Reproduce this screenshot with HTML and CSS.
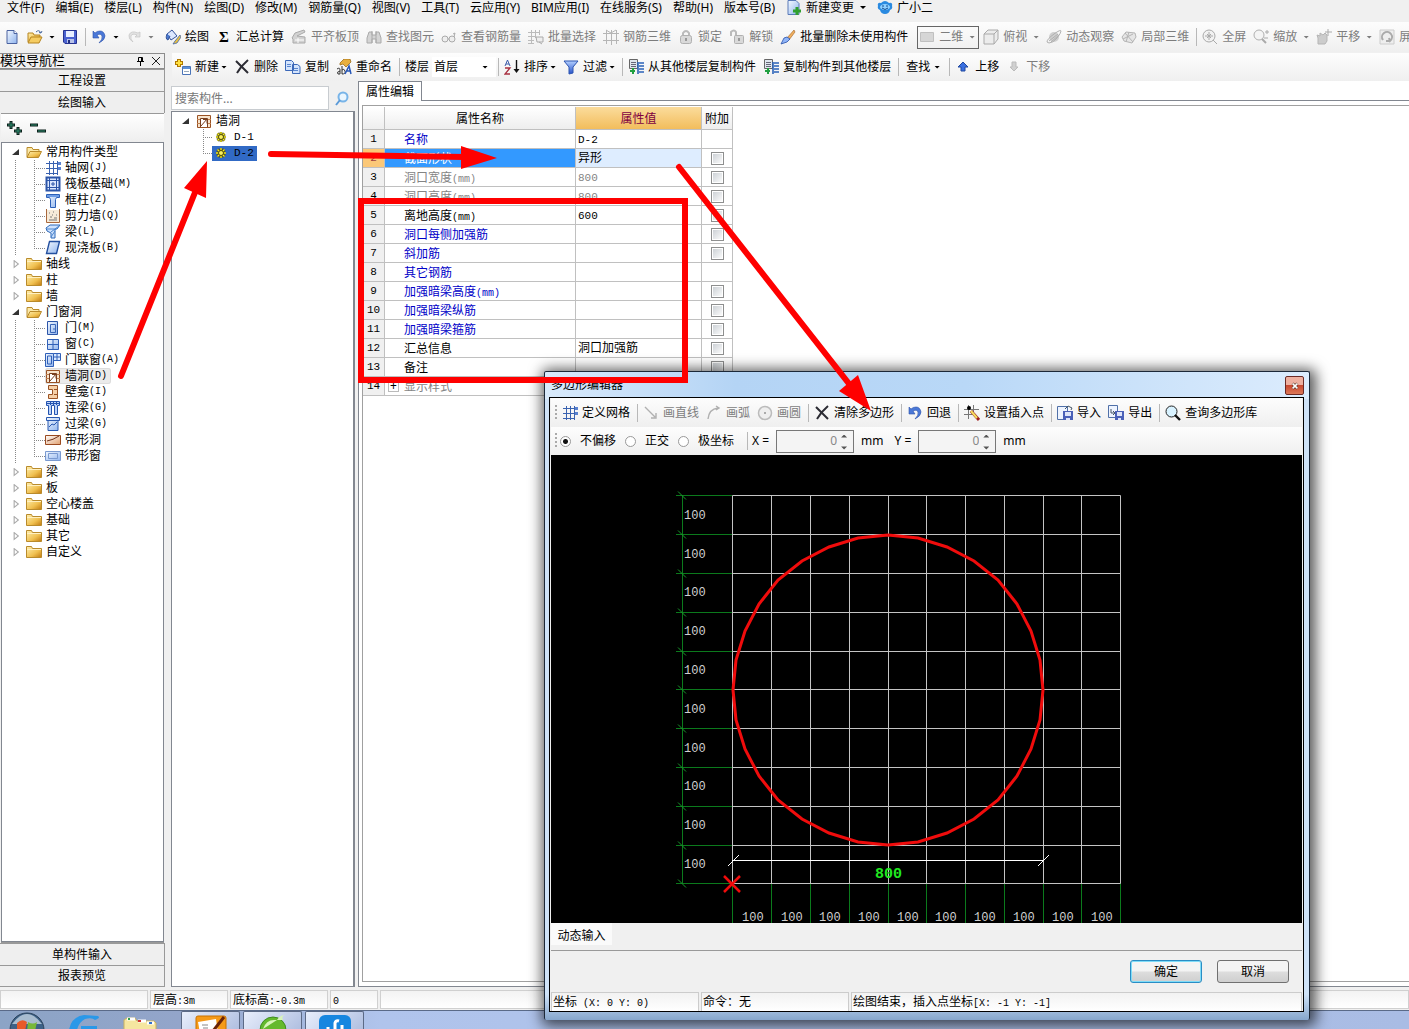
FILE: index.html
```html
<!DOCTYPE html>
<html lang="zh-CN">
<head>
<meta charset="utf-8">
<title>多边形编辑器</title>
<link rel="stylesheet" href="styles.css">
</head>
<body>
<svg class="defs" aria-hidden="true">
<defs>
<linearGradient id="gFold" x2="1" y2="1"><stop offset="0" stop-color="#fff0b0"/><stop offset=".6" stop-color="#f0c050"/><stop offset="1" stop-color="#c07a10"/></linearGradient>
<linearGradient id="gBlue" x2="1" y2="1"><stop offset="0" stop-color="#f4f9ff"/><stop offset="1" stop-color="#8fb4ee"/></linearGradient>
<linearGradient id="gDeep" x2="0" y2="1"><stop offset="0" stop-color="#b4d0ff"/><stop offset="1" stop-color="#2450c8"/></linearGradient>
<linearGradient id="gOr" x2="1" y2="1"><stop offset="0" stop-color="#fff"/><stop offset="1" stop-color="#e0a070"/></linearGradient>
</defs>
<symbol id="new" viewBox="0 0 16 16"><path d="M3 1.500h7l3 3v10H3z" fill="url(#gBlue)" stroke="#4a62a0"/><path d="M10 1.500v3h3" fill="#fff" stroke="#4a62a0"/></symbol>
<symbol id="open" viewBox="0 0 16 16"><path d="M1 13V4h5l1 2h6v3" fill="url(#gFold)" stroke="#b58420"/><path d="M1 14l3-6h11l-3 6z" fill="#f5cc62" stroke="#b58420"/><path d="M9 3q3-3 5 1m0 0l-2-.5m2 .5l1-2" fill="none" stroke="#4a6aa0"/></symbol>
<symbol id="save" viewBox="0 0 16 16"><path d="M1.500 1.500h13v13H3l-1.500-1.500z" fill="#4a62d0" stroke="#263390"/><path d="M4 2h8v6H4z" fill="#e8efff"/><path d="M5 10h7v4H5z" fill="#b9c3e8"/><path d="M6 11h2v3H6z" fill="#223080"/></symbol>
<symbol id="undo" viewBox="0 0 16 16"><path d="M2 2v7h6L6 6q4-2 5 1t-3 7q6-3 6-7-1-5-5-5-3 0-5 2z" fill="#4a78d8" stroke="#2b50a8" stroke-width=".6"/></symbol>
<symbol id="redo" viewBox="0 0 16 16"><path d="M14 3v5H9l2-2q-5-2-6 1t2 6q-5-3-4-7 2-5 9-2z" fill="#e2e2e2" stroke="#c4c4c4" stroke-width=".7"/></symbol>
<symbol id="paint" viewBox="0 0 16 16"><path d="M2 5l5-4 5 6-6 4z" fill="#dce8ff" stroke="#34539a"/><path d="M2 5q-2 5 1 6l2-4" fill="#4a7ad0" stroke="#34539a"/><path d="M15 6l-5 6-2 3 4-1 4-6z" fill="#e8c040" stroke="#4868a8" stroke-width=".8"/></symbol>
<symbol id="slab" viewBox="0 0 16 16"><path d="M1 9l3-5 9-3 1 2-8 4 8 1v6H2v-4z" fill="#d2d2d2" stroke="#aaa"/><path d="M4 11h9M7 9v5" stroke="#fff"/></symbol>
<symbol id="find" viewBox="0 0 16 16"><path d="M3 3h3v3h4V3h3l2 6v5h-5v-4H6v4H1V9z" fill="#d4d4d4" stroke="#aaa"/><path d="M6 2v12M10 2v12" stroke="#aaa"/></symbol>
<symbol id="glass" viewBox="0 0 16 16"><circle cx="4" cy="10" r="3" fill="#eee" stroke="#aaa"/><circle cx="11" cy="10" r="3" fill="#eee" stroke="#aaa"/><path d="M7 10h1M13 8l1-4-2 1" fill="none" stroke="#aaa"/></symbol>
<symbol id="batch" viewBox="0 0 16 16"><path d="M0 3.500h11M0 7.500h8M0 11.500h6M0 14.500h6M3.500 1v14M7.500 1v8M11.500 1v5" stroke="#bbb"/><path d="M8 8h7v5H9zM11 13l3 2" fill="#eee" stroke="#aaa"/></symbol>
<symbol id="grid3" viewBox="0 0 16 16"><path d="M0 4.500h16M0 11.500h16M3.500 1v14M8.500 1v15M13.500 1v14M3 1l5 3 5-3" fill="none" stroke="#b5b5b5"/></symbol>
<symbol id="lock" viewBox="0 0 16 16"><path d="M5 7V4q3-4 6 0v3" fill="none" stroke="#bbb" stroke-width="2"/><rect x="2.500" y="6.500" width="11" height="8" rx="2" fill="#d9d9d9" stroke="#b0b0b0"/><path d="M8 9v3" stroke="#999" stroke-width="2"/></symbol>
<symbol id="unlock" viewBox="0 0 16 16"><path d="M2 7V3q3-3 5 0v4" fill="none" stroke="#bbb" stroke-width="2"/><rect x="5.500" y="6.500" width="9" height="8" rx="1" fill="#d9d9d9" stroke="#b0b0b0"/><path d="M10 9v3" stroke="#999" stroke-width="2"/></symbol>
<symbol id="brush" viewBox="0 0 16 16"><path d="M14 1L7 9l2 2 6-8z" fill="#f0b060" stroke="#a06020" stroke-width=".6"/><path d="M7 8l-3 1-3 6 6-2 3-3z" fill="#8fb4f8" stroke="#2850a8" stroke-width=".8"/></symbol>
<symbol id="flat" viewBox="0 0 16 16"><path d="M1.500 3.500h13v9h-13z" fill="#d6d6d6" stroke="#c0c0c0"/></symbol>
<symbol id="cube" viewBox="0 0 16 16"><path d="M1 5l4-4h10v9l-4 5H1zM1 5h10v10M11 5l4-4" fill="#ececec" stroke="#aaa"/></symbol>
<symbol id="orbit" viewBox="0 0 16 16"><circle cx="8" cy="8" r="5" fill="#cfcfcf"/><path d="M1 13q0-3 7-8t7-3-4 7-8 5zM3 12l9-7M5 13l8-7" fill="none" stroke="#b0b0b0"/></symbol>
<symbol id="local" viewBox="0 0 16 16"><path d="M1 8l4-5 9 1 1 4-4 6-8-2zM4 4l8 9M2 10l10-5M8 3L5 13" fill="#e6e6e6" stroke="#b5b5b5"/></symbol>
<symbol id="full" viewBox="0 0 16 16"><circle cx="7" cy="7" r="6" fill="#f2f2f2" stroke="#aaa"/><path d="M3 7h8M7 3v8M5 5l4 4M9 5L5 9M11 11l4 4" stroke="#aaa"/></symbol>
<symbol id="zoomi" viewBox="0 0 16 16"><circle cx="6" cy="6" r="5" fill="#f4f4f4" stroke="#b0b0b0"/><path d="M9 10l4 4" stroke="#aaa" stroke-width="2"/><path d="M12 3h4M14 1v4M11 9h4" stroke="#aaa"/></symbol>
<symbol id="pan" viewBox="0 0 16 16"><path d="M2 15V9l-1-3 3 1V4l3 2 2-2 2 2v6l-2 3z" fill="#ccc" stroke="#b5b5b5"/><path d="M9 3h7M12 0v7" stroke="#aaa"/></symbol>
<symbol id="rot" viewBox="0 0 16 16"><path d="M1 1h14v14H1z" fill="#eee" stroke="#ccc"/><path d="M4 11a5 5 0 1 1 7 1l-1-3m1 3h-4" fill="none" stroke="#aaa" stroke-width="2"/></symbol>
<symbol id="docplus" viewBox="0 0 16 16"><path d="M2 .5h8l3 3v11H2z" fill="url(#gBlue)" stroke="#5a7ab8"/><path d="M11 7v8M7 11h8" stroke="#30a030" stroke-width="3"/></symbol>
<symbol id="pet" viewBox="0 0 16 16"><path d="M4 3q4-4 8 0 4-1 3 3 1 3-2 4-1 4-5 4t-5-4q-3-1-2-4-1-4 3-3z" fill="#2a8ae0"/><ellipse cx="8" cy="7" rx="5" ry="3" fill="#8fd0ff"/><path d="M6 5v2M10 5v2M5 8q3 3 6 0" stroke="#124a90" fill="none"/></symbol>
<symbol id="create" viewBox="0 0 16 16"><path d="M4 0v8M0 4h8" stroke="#b07800" stroke-width="4"/><path d="M4 1v6M1 4h6" stroke="#ffe040" stroke-width="2"/><path d="M7.500 7.500h8v8h-8z" fill="#fff" stroke="#4a74b8"/><path d="M8 8h7v2H8z" fill="#5b8fd8"/><path d="M9 12.500h5" stroke="#9ab"/></symbol>
<symbol id="del" viewBox="0 0 16 16"><path d="M2 2l12 12M14 1Q7 7 3 14" stroke="#2c2c34" stroke-width="2" fill="none"/></symbol>
<symbol id="copy" viewBox="0 0 16 16"><path d="M.5 1.500h6l2 2v8h-8zM7.500 5.500h5l2.500 2v7h-7.500z" fill="#d4e4fc" stroke="#3c68b8"/><path d="M2 5.500h4M2 7.500h4M9 9.500h4M9 11.500h4" stroke="#5a86d0"/></symbol>
<symbol id="rename" viewBox="0 0 16 16"><path d="M4 4l4-4h6l1 3-5 5-3-3-3 1z" fill="#e8b040" stroke="#906010" stroke-width=".7"/><path d="M1 10q3-2 3 1v4H2q-2-2 2-3M6 7v8q4 0 3-3t-3-1" fill="none" stroke="#333"/><path d="M9 15l4-8 2 8M10 12h5" fill="none" stroke="#2858b8" stroke-width="1.500"/></symbol>
<symbol id="sort" viewBox="0 0 16 16"><path d="M1 7l2.500-6L6 7M2 5h3" fill="none" stroke="#3a5aa8"/><path d="M1 9h5l-5 6h5" fill="none" stroke="#a83040" stroke-width="1.300"/><path d="M12.500 1v11" stroke="#111" stroke-width="1.400"/><path d="M9.500 10h6l-3 4z" fill="#111"/></symbol>
<symbol id="filter" viewBox="0 0 16 16"><path d="M1 2h14L10 8v6l-4 1V8z" fill="url(#gDeep)" stroke="#2c54b0"/></symbol>
<symbol id="floor" viewBox="0 0 16 16"><path d="M1.500.5h8v9h-8z" fill="#dfe6ee" stroke="#666"/><path d="M3 3.500h5M3 5.500h5M3 7.500h5" stroke="#667"/><path d="M2 12h5M5 9v6" stroke="#20a040" stroke-width="2"/><path d="M10 3v12M11 4h5M11 7h5M11 10h5M11 13h5" stroke="#2a62b8" stroke-width="1.600"/></symbol>
<symbol id="up" viewBox="0 0 16 16"><path d="M8 3l5 5h-3v4H6V8H3z" fill="#3a70e0" stroke="#2048a0"/></symbol>
<symbol id="down" viewBox="0 0 16 16"><path d="M8 12l4-4h-2V3H6v5H4z" fill="#d0d0d0" stroke="#bbb"/></symbol>
<symbol id="mag" viewBox="0 0 16 16"><circle cx="9" cy="7" r="4.500" fill="#eaf6ff" stroke="#78b4e8" stroke-width="2"/><path d="M6 10l-4 5" stroke="#5a9ad8" stroke-width="2"/></symbol>
<symbol id="fo" viewBox="0 0 16 16"><path d="M1 13V3.500h5l1 2h6V8" fill="#fbe9a8" stroke="#b98b2c"/><path d="M1 13.500l3-6h11.500l-3 6z" fill="url(#gFold)" stroke="#b98b2c"/></symbol>
<symbol id="fc" viewBox="0 0 16 16"><path d="M.5 13.500v-11h5l1 2h9v9z" fill="url(#gFold)" stroke="#b98b2c"/><path d="M1 5.500h14" stroke="#fff0c0"/></symbol>
<symbol id="axis" viewBox="0 0 16 16"><path d="M1 3.500h13M1 8.500h13M1 13.500h12M4.500 1v14M8.500 1v14M12.500 1v14" stroke="#3a62b0" fill="none"/><path d="M13 2h3v3h-3zM13 7h3v3h-3z" fill="#5a82d0"/></symbol>
<symbol id="raft" viewBox="0 0 16 16"><path d="M1.500 1.500h13v13h-13z" fill="#dce8ff" stroke="#2c55a8" stroke-width="2"/><path d="M4.500 4.500h7v7h-7zM4.500 1v14M11.500 1v14M1 4.500h14M1 11.500h14M8 6v4M6 8h4" stroke="#2c55a8" fill="none"/></symbol>
<symbol id="col" viewBox="0 0 16 16"><path d="M1.500 2.500h13v3h-3l-1 2v8h-5v-8l-1-2h-3z" fill="url(#gBlue)" stroke="#2c60b8"/><path d="M2 3h12v2H2z" fill="#6e9ce4"/></symbol>
<symbol id="wallq" viewBox="0 0 16 16"><path d="M2 2h12v12H2z" fill="#f6ead8"/><path d="M1.500 1v13.500h13V1" fill="none" stroke="#a8683c"/><path d="M4 5h1M8 4h1M11 7h1M5 9h2M9 10h3M4 12h8M7 7h1" stroke="#777"/></symbol>
<symbol id="beam" viewBox="0 0 16 16"><path d="M1 4l4-3h10l-3 4h-2v9H6V9L2 7z" fill="#cfe2fc" stroke="#2d68b8"/><path d="M2 5h9M6 8l8-6M6 13l4-6" stroke="#4a86d0"/></symbol>
<symbol id="slabb" viewBox="0 0 16 16"><path d="M4.500 1.500h10l-3 12h-10z" fill="url(#gBlue)" stroke="#2450a0" stroke-width="1.400"/></symbol>
<symbol id="door" viewBox="0 0 16 16"><path d="M2.500 1.500h10v13h-10z" fill="url(#gBlue)" stroke="#2c55a8"/><path d="M5.500 4.500h5v8h-5zM9 8v2" fill="none" stroke="#3a66b8"/></symbol>
<symbol id="win" viewBox="0 0 16 16"><path d="M2.500 3.500h11v10h-11zM8 3v11M2 8.500h12" fill="url(#gBlue)" stroke="#3060b8"/></symbol>
<symbol id="dw" viewBox="0 0 16 16"><path d="M.5 1.500h8v13h-8zM2.500 4h4v8h-4z" fill="url(#gBlue)" stroke="#3060b8"/><path d="M8.500 1.500h7v7h-7zM12 1v8M8 5h8" fill="#d8e8ff" stroke="#3060b8"/></symbol>
<symbol id="hole" viewBox="0 0 16 16"><path d="M1.500 2.500h13v12h-13z" fill="#f8e4cc" stroke="#9a5224"/><path d="M1 6.500h3M1 10.500h3M12 6.500h3M12 10.500h3" stroke="#c08050"/><path d="M4.500 14V5.500h7V14" fill="#fff" stroke="#7a4020"/><path d="M5 13l6-7M7 6.500h4v4" fill="none" stroke="#7a4020"/></symbol>
<symbol id="niche" viewBox="0 0 16 16"><path d="M3.500 1.500h9v13h-9v-4h4v-5h-4zM9 5.500h3M9 10.500h3" fill="#f6d0a8" stroke="#9a5224"/></symbol>
<symbol id="lbeam" viewBox="0 0 16 16"><path d="M1.500 1.500h13v4h-2v9h-3v-9h-3v9h-3v-9h-2z" fill="#bcd4fa" stroke="#2454b0"/><path d="M1 3.500h14M5.500 1v4M8.500 1v4M11.500 1v4" stroke="#2454b0"/></symbol>
<symbol id="gbeam" viewBox="0 0 16 16"><path d="M1.500 1.500h13v3h-1.500v10H3v-10H1.500z" fill="url(#gBlue)" stroke="#2858b0"/><path d="M3 4.500h10M4 11l3-3 2 1 3-3" fill="none" stroke="#2858b0"/></symbol>
<symbol id="shole" viewBox="0 0 16 16"><path d="M.5 3.500h15v9H.5z" fill="url(#gOr)" stroke="#9a4a20"/><path d="M2 9q6-1 12-5" fill="none" stroke="#703018"/></symbol>
<symbol id="swin" viewBox="0 0 16 16"><path d="M.5 3.500h15v9H.5zM3.500 5.500h9v5h-9z" fill="url(#gBlue)" stroke="#7a9ad0"/></symbol>
<symbol id="gear" viewBox="0 0 16 16"><path d="M8 3v10M3 8h10M4.500 4.500l7 7M11.500 4.500l-7 7" stroke="#4a4600" stroke-width="2.600"/><path d="M8 3v10M3 8h10M4.500 4.500l7 7M11.500 4.500l-7 7" stroke="#f4ec28" stroke-width="1.400"/><circle cx="8" cy="8" r="2.500" fill="#f8f060" stroke="#4a4600"/></symbol>
<symbol id="line" viewBox="0 0 16 16"><path d="M2 2l10 10M13 8v5H8" fill="none" stroke="#b0b0b0" stroke-width="1.400"/></symbol>
<symbol id="arc" viewBox="0 0 16 16"><path d="M2 14Q3 4 12 3M10 1l3 2-3 2" fill="none" stroke="#b0b0b0" stroke-width="1.400"/></symbol>
<symbol id="circ" viewBox="0 0 16 16"><circle cx="8" cy="8" r="6.500" fill="#eee" stroke="#bbb" stroke-width="1.500"/><path d="M8 7v2" stroke="#aaa" stroke-width="2"/></symbol>
<symbol id="insert" viewBox="0 0 16 16"><path d="M0 4.500h15M0 9.500h9M4.500 0v14M9.500 0v8" stroke="#777"/><circle cx="5" cy="3" r="2" fill="#000"/><path d="M7 6l8 9" stroke="#a02020" stroke-width="3"/><path d="M7 6l6 7" stroke="#f4e060" stroke-width="2"/></symbol>
<symbol id="imp" viewBox="0 0 16 16"><path d="M.5 1.500h10v13H.5z" fill="#eef4ff" stroke="#5070a8"/><path d="M6 6h10v9H6z" fill="#4a60b8"/><path d="M8 7h6v4H8zM9 13h4v2H9z" fill="#dde4f8"/><path d="M8 4l3-3 4 2-1 2" fill="none" stroke="#456"/></symbol>
<symbol id="exp" viewBox="0 0 16 16"><path d="M.5.5h9v12h-9z" fill="#eef4ff" stroke="#5070a8"/><path d="M7 6h9v9H7z" fill="#4a60b8"/><path d="M9 7h5v4H9zM10 13h3v2h-3z" fill="#dde4f8"/><path d="M3 4v4h4M5 6l2 2-2 2" fill="none" stroke="#456"/></symbol>
<symbol id="query" viewBox="0 0 16 16"><circle cx="6.500" cy="6.500" r="5.500" fill="#d8f2ff" stroke="#222"/><path d="M10 10l5 5" stroke="#111" stroke-width="2.400"/></symbol>
</svg>

<nav class="menubar">
<button>文件(F)</button><button>编辑(E)</button><button>楼层(L)</button><button>构件(N)</button><button>绘图(D)</button><button>修改(M)</button><button>钢筋量(Q)</button><button>视图(V)</button><button>工具(T)</button><button>云应用(Y)</button><button>BIM应用(I)</button><button>在线服务(S)</button><button>帮助(H)</button><button>版本号(B)</button>
<button class="tool"><svg><use href="#docplus"/></svg>新建变更<i class="dd"></i></button>
<button class="tool"><svg><use href="#pet"/></svg>广小二</button>
</nav>

<div class="toolbar main-tools">
<div class="group quick">
<button class="tool" aria-label="新建"><svg><use href="#new"/></svg></button>
<button class="tool" aria-label="打开"><svg><use href="#open"/></svg><i class="dd"></i></button>
<button class="tool" aria-label="保存"><svg><use href="#save"/></svg></button>
<span class="sep"></span>
<button class="tool" aria-label="撤销"><svg><use href="#undo"/></svg><i class="dd"></i></button>
<button class="tool off" aria-label="重做"><svg><use href="#redo"/></svg><i class="dd"></i></button>
</div>
<div class="group">
<button class="tool"><svg><use href="#paint"/></svg>绘图</button>
<button class="tool"><b class="sigma">Σ</b>汇总计算</button>
<button class="tool off"><svg><use href="#slab"/></svg>平齐板顶</button>
<button class="tool off"><svg><use href="#find"/></svg>查找图元</button>
<button class="tool off"><svg><use href="#glass"/></svg>查看钢筋量</button>
<button class="tool off"><svg><use href="#batch"/></svg>批量选择</button>
<button class="tool off"><svg><use href="#grid3"/></svg>钢筋三维</button>
<button class="tool off"><svg><use href="#lock"/></svg>锁定</button>
<button class="tool off"><svg><use href="#unlock"/></svg>解锁</button>
<button class="tool"><svg><use href="#brush"/></svg>批量删除未使用构件</button>
<button class="tool off boxed"><svg><use href="#flat"/></svg>二维<i class="dd"></i></button>
<button class="tool off"><svg><use href="#cube"/></svg>俯视<i class="dd"></i></button>
<button class="tool off"><svg><use href="#orbit"/></svg>动态观察</button>
<button class="tool off"><svg><use href="#local"/></svg>局部三维</button>
<span class="sep"></span>
<button class="tool off"><svg><use href="#full"/></svg>全屏</button>
<button class="tool off"><svg><use href="#zoomi"/></svg>缩放<i class="dd"></i></button>
<button class="tool off"><svg><use href="#pan"/></svg>平移<i class="dd"></i></button>
<button class="tool off"><svg><use href="#rot"/></svg>屏</button>
</div>
</div>

<div class="work">
<aside class="navpanel">
<header class="nav-title"><span>模块导航栏</span><svg class="pin" viewBox="0 0 26 11"><path d="M3.500 5V1.500h4V5M6.500 1v4M2 5.500h7M5.500 6v4" fill="none" stroke="#000"/><path d="M17 1l8 8M25 1l-8 8" stroke="#222"/></svg></header>
<button class="nav-btn">工程设置</button>
<button class="nav-btn">绘图输入</button>
<div class="nav-box">
<div class="fold-tools"><svg viewBox="0 0 42 16"><path d="M5 1v8M1 5h8M12 7v8M8 11h8M24 5h8M31 11h9" stroke="#0c1f1a" stroke-width="3"/><path d="M5 2v6M2 5h6M12 8v6M9 11h6M25 5h6M32 11h7" stroke="#2f8f70"/></svg></div>
<ul class="tree">
<li><div class="row open"><svg><use href="#fo"/></svg>常用构件类型</div>
<ul class="kids">
<li><svg><use href="#axis"/></svg>轴网<span class="m">(J)</span></li>
<li><svg><use href="#raft"/></svg>筏板基础<span class="m">(M)</span></li>
<li><svg><use href="#col"/></svg>框柱<span class="m">(Z)</span></li>
<li><svg><use href="#wallq"/></svg>剪力墙<span class="m">(Q)</span></li>
<li><svg><use href="#beam"/></svg>梁<span class="m">(L)</span></li>
<li><svg><use href="#slabb"/></svg>现浇板<span class="m">(B)</span></li>
</ul></li>
<li><div class="row"><svg><use href="#fc"/></svg>轴线</div></li>
<li><div class="row"><svg><use href="#fc"/></svg>柱</div></li>
<li><div class="row"><svg><use href="#fc"/></svg>墙</div></li>
<li><div class="row open"><svg><use href="#fo"/></svg>门窗洞</div>
<ul class="kids">
<li><svg><use href="#door"/></svg>门<span class="m">(M)</span></li>
<li><svg><use href="#win"/></svg>窗<span class="m">(C)</span></li>
<li><svg><use href="#dw"/></svg>门联窗<span class="m">(A)</span></li>
<li><span class="current"><svg><use href="#hole"/></svg>墙洞<span class="m">(D)</span></span></li>
<li><svg><use href="#niche"/></svg>壁龛<span class="m">(I)</span></li>
<li><svg><use href="#lbeam"/></svg>连梁<span class="m">(G)</span></li>
<li><svg><use href="#gbeam"/></svg>过梁<span class="m">(G)</span></li>
<li><svg><use href="#shole"/></svg>带形洞</li>
<li><svg><use href="#swin"/></svg>带形窗</li>
</ul></li>
<li><div class="row"><svg><use href="#fc"/></svg>梁</div></li>
<li><div class="row"><svg><use href="#fc"/></svg>板</div></li>
<li><div class="row"><svg><use href="#fc"/></svg>空心楼盖</div></li>
<li><div class="row"><svg><use href="#fc"/></svg>基础</div></li>
<li><div class="row"><svg><use href="#fc"/></svg>其它</div></li>
<li><div class="row"><svg><use href="#fc"/></svg>自定义</div></li>
</ul>
</div>
<button class="nav-btn">单构件输入</button>
<button class="nav-btn">报表预览</button>
</aside>

<main class="editor">
<div class="toolbar edit-tools">
<button class="tool near"><svg><use href="#create"/></svg>新建<i class="dd"></i></button>
<button class="tool"><svg><use href="#del"/></svg>删除</button>
<button class="tool"><svg><use href="#copy"/></svg>复制</button>
<button class="tool"><svg><use href="#rename"/></svg>重命名</button>
<span class="sep"></span>
<label class="floor">楼层 <span class="pick"><select><option>首层</option></select><i class="dd"></i></span></label>
<span class="sep"></span>
<button class="tool near"><svg><use href="#sort"/></svg>排序<i class="dd"></i></button>
<button class="tool near"><svg><use href="#filter"/></svg>过滤<i class="dd"></i></button>
<span class="sep"></span>
<button class="tool"><svg><use href="#floor"/></svg>从其他楼层复制构件</button>
<button class="tool"><svg><use href="#floor"/></svg>复制构件到其他楼层</button>
<span class="sep"></span>
<button class="tool near textual">查找<i class="dd"></i></button>
<span class="sep"></span>
<button class="tool"><svg><use href="#up"/></svg>上移</button>
<button class="tool off"><svg><use href="#down"/></svg>下移</button>
</div>
<div class="panes">
<section class="components">
<div class="search"><input type="text" placeholder="搜索构件..." aria-label="搜索构件"><button aria-label="搜索"><svg><use href="#mag"/></svg></button></div>
<ul class="tree comp-tree">
<li><div class="row open"><svg><use href="#hole"/></svg>墙洞</div>
<ul class="kids">
<li><svg><use href="#gear"/></svg><span class="m">D-1</span></li>
<li><span class="selected"><svg><use href="#gear"/></svg><span class="m">D-2</span></span></li>
</ul></li>
</ul>
</section>
<section class="props">
<div class="tabs"><button class="tab">属性编辑</button></div>
<div class="props-frame"><div class="props-body">
<table>
<colgroup><col class="c-no"><col class="c-name"><col class="c-val"><col class="c-add"></colgroup>
<thead><tr><th></th><th>属性名称</th><th class="hot">属性值</th><th>附加</th></tr></thead>
<tbody>
<tr><th>1</th><td class="blue">名称</td><td><span class="m">D-2</span></td><td></td></tr>
<tr class="sel"><th>2</th><td>截面形状</td><td>异形</td><td><input type="checkbox" aria-label="附加 截面形状"></td></tr>
<tr class="dim"><th>3</th><td>洞口宽度<span class="m">(mm)</span></td><td><span class="m">800</span></td><td><input type="checkbox" aria-label="附加 洞口宽度"></td></tr>
<tr class="dim"><th>4</th><td>洞口高度<span class="m">(mm)</span></td><td><span class="m">800</span></td><td><input type="checkbox" aria-label="附加 洞口高度"></td></tr>
<tr><th>5</th><td>离地高度<span class="m">(mm)</span></td><td><span class="m">600</span></td><td><input type="checkbox" aria-label="附加 离地高度"></td></tr>
<tr><th>6</th><td class="blue">洞口每侧加强筋</td><td></td><td><input type="checkbox" aria-label="附加 洞口每侧加强筋"></td></tr>
<tr><th>7</th><td class="blue">斜加筋</td><td></td><td><input type="checkbox" aria-label="附加 斜加筋"></td></tr>
<tr><th>8</th><td class="blue">其它钢筋</td><td></td><td></td></tr>
<tr><th>9</th><td class="blue">加强暗梁高度<span class="m">(mm)</span></td><td></td><td><input type="checkbox" aria-label="附加 加强暗梁高度"></td></tr>
<tr><th>10</th><td class="blue">加强暗梁纵筋</td><td></td><td><input type="checkbox" aria-label="附加 加强暗梁纵筋"></td></tr>
<tr><th>11</th><td class="blue">加强暗梁箍筋</td><td></td><td><input type="checkbox" aria-label="附加 加强暗梁箍筋"></td></tr>
<tr><th>12</th><td>汇总信息</td><td>洞口加强筋</td><td><input type="checkbox" aria-label="附加 汇总信息"></td></tr>
<tr><th>13</th><td>备注</td><td></td><td><input type="checkbox" aria-label="附加 备注"></td></tr>
<tr class="dim"><th>14</th><td class="expand"><button aria-label="展开">+</button>显示样式</td><td></td><td></td></tr>
</tbody>
</table>
</div></div>
</section>
</div>
</main>
</div>

<footer class="statusbar"><span class="s1"></span><span class="s2">层高<span class="m">:3m</span></span><span class="s3">底标高<span class="m">:-0.3m</span></span><span class="s4"><span class="m">0</span></span><span class="rest"></span></footer>

<div class="taskbar">
<button class="launch" aria-label="开始"><svg viewBox="0 0 40 19"><circle cx="21" cy="19" r="17" fill="#3d6288" stroke="#2a4058"/><path d="M6 13q15-20 30 0z" fill="#a8bccf"/><path d="M11 12q5-5 10-1l-2 9h-8z" fill="#e85a28"/><path d="M22 11q5 3 9 0l-2 9h-8z" fill="#78b83a"/></svg></button>
<button class="launch" aria-label="浏览器"><svg viewBox="0 0 40 19"><path d="M7 19Q9 6 22 4l14 1q3 2-3 4-3-3-10-1-6 3-8 11zM19 19v-4h16v4z" fill="#2a98e8"/></svg></button>
<button class="launch wide" aria-label="文件夹"><svg viewBox="0 0 40 19"><path d="M6 19V9l3-2h8l2 3h17l2 2v7z" fill="#f5e6a0" stroke="#c8b060"/><path d="M9 8h8M20 10h8M29 12h7" stroke="#fff" stroke-width="3"/><path d="M10 8h2" stroke="#30a050" stroke-width="2"/><path d="M20 10h3" stroke="#d03030" stroke-width="2"/><path d="M31 12h3" stroke="#3070d0" stroke-width="2"/></svg></button>
<button class="task" aria-label="任务一"><svg viewBox="0 0 40 19"><rect x="5" y="4" width="30" height="20" rx="2" fill="#f59a18" stroke="#c87000"/><path d="M7 10l18-3 2 14H9z" fill="#fff"/><path d="M33 5L22 19" stroke="#6a2408" stroke-width="3"/><path d="M11 13h6M12 16h5" stroke="#888"/></svg></button>
<button class="task" aria-label="任务二"><svg viewBox="0 0 40 19"><circle cx="20" cy="18" r="13" fill="#65b92c" stroke="#3e8d20"/><path d="M10 17q3-9 11-9h9q-2-4 2-5-5 0-8 5" fill="#d8f5b8"/></svg></button>
<button class="task" aria-label="任务三"><svg viewBox="0 0 40 19"><rect x="4" y="3" width="32" height="28" rx="6" fill="#1686e0"/><path d="M13 19v-4M27 19v-6M20 19v-8q1-3 4-2" fill="none" stroke="#fff" stroke-width="3"/></svg></button>
</div>

<section class="dialog" aria-label="多边形编辑器">
<header class="dlg-title"><span>多边形编辑器</span><button aria-label="关闭"><svg viewBox="0 0 10 10"><path d="M2 2l6 6M8 2L2 8" stroke="#532" stroke-width="3.500"/><path d="M2 2l6 6M8 2L2 8" stroke="#fff" stroke-width="2"/></svg></button></header>
<div class="dlg-body">
<div class="toolbar dlg-tools">
<span class="grip"></span>
<button class="tool"><svg><use href="#axis"/></svg>定义网格</button>
<span class="sep"></span>
<button class="tool off"><svg><use href="#line"/></svg>画直线</button>
<button class="tool off"><svg><use href="#arc"/></svg>画弧</button>
<button class="tool off"><svg><use href="#circ"/></svg>画圆</button>
<span class="sep"></span>
<button class="tool"><svg><use href="#del"/></svg>清除多边形</button>
<span class="sep"></span>
<button class="tool"><svg><use href="#undo"/></svg>回退</button>
<span class="sep"></span>
<button class="tool"><svg><use href="#insert"/></svg>设置插入点</button>
<span class="sep"></span>
<button class="tool"><svg><use href="#imp"/></svg>导入</button>
<button class="tool"><svg><use href="#exp"/></svg>导出</button>
<span class="sep"></span>
<button class="tool"><svg><use href="#query"/></svg>查询多边形库</button>
</div>
<div class="toolbar dlg-options">
<span class="grip"></span>
<label class="radio"><input type="radio" name="mode" checked>不偏移</label>
<label class="radio"><input type="radio" name="mode">正交</label>
<label class="radio"><input type="radio" name="mode">极坐标</label>
<span class="sep"></span>
<label class="coord">X = <span class="spin"><input type="text" value="0"><i></i></span> mm</label>
<label class="coord">Y = <span class="spin"><input type="text" value="0"><i></i></span> mm</label>
</div>
<svg class="canvas" role="img" aria-label="多边形">
<defs>
<g id="tick"><path d="M-6 0H50" stroke="#0b7a1c"/><path d="M-4-4L4 4" stroke="#1a9a2c"/></g>
<path id="drop" d="M0 0V40" stroke="#0b7a1c"/>
</defs>
<path d="M131.500 40v389" stroke="#0b7a1c"/>
<use href="#tick" x="131" y="40.500"/><use href="#tick" x="131" y="79.500"/><use href="#tick" x="131" y="118.500"/><use href="#tick" x="131" y="157.500"/><use href="#tick" x="131" y="196.500"/><use href="#tick" x="131" y="234.500"/><use href="#tick" x="131" y="273.500"/><use href="#tick" x="131" y="312.500"/><use href="#tick" x="131" y="351.500"/><use href="#tick" x="131" y="390.500"/><use href="#tick" x="131" y="428.500"/>
<use href="#drop" x="181.500" y="428"/><use href="#drop" x="220.500" y="428"/><use href="#drop" x="259.500" y="428"/><use href="#drop" x="298.500" y="428"/><use href="#drop" x="337.500" y="428"/><use href="#drop" x="375.500" y="428"/><use href="#drop" x="414.500" y="428"/><use href="#drop" x="453.500" y="428"/><use href="#drop" x="492.500" y="428"/><use href="#drop" x="530.500" y="428"/><use href="#drop" x="569.500" y="428"/>
<path fill="none" stroke="#c4c4c4" d="M181.500 40.500h388M181.500 79.500h388M181.500 118.500h388M181.500 157.500h388M181.500 196.500h388M181.500 234.500h388M181.500 273.500h388M181.500 312.500h388M181.500 351.500h388M181.500 390.500h388M181.500 428.500h388M181.500 40.500v388M220.500 40.500v388M259.500 40.500v388M298.500 40.500v388M337.500 40.500v388M375.500 40.500v388M414.500 40.500v388M453.500 40.500v388M492.500 40.500v388M530.500 40.500v388M569.500 40.500v388"/>
<g class="dims">
<text x="133" y="64">100</text><text x="133" y="103">100</text><text x="133" y="141">100</text><text x="133" y="180">100</text><text x="133" y="219">100</text><text x="133" y="258">100</text><text x="133" y="297">100</text><text x="133" y="335">100</text><text x="133" y="374">100</text><text x="133" y="413">100</text>
<text x="191" y="466">100</text><text x="230" y="466">100</text><text x="268" y="466">100</text><text x="307" y="466">100</text><text x="346" y="466">100</text><text x="384" y="466">100</text><text x="423" y="466">100</text><text x="462" y="466">100</text><text x="501" y="466">100</text><text x="540" y="466">100</text>
</g>
<path d="M181 405.500h311M177 411l11-11M487 411l11-11" stroke="#fff" fill="none"/>
<text class="total" x="324" y="423">800</text>
<polygon transform="translate(337 235)" fill="none" stroke="#f00c0c" stroke-width="3" points="-155,0 -152,-30 -143,-59 -129,-86 -110,-110 -86,-129 -59,-143 -30,-152 0,-155 30,-152 59,-143 86,-129 110,-110 129,-86 143,-59 152,-30 155,0 152,30 143,59 129,86 110,110 86,129 59,143 30,152 0,155 -30,152 -59,143 -86,129 -110,110 -129,86 -143,59 -152,30"/>
<path d="M173 421l16 16M189 421l-16 16" stroke="#f00c0c" stroke-width="2.500"/>
</svg>
<div class="dyn"><button>动态输入</button></div>
<div class="actions"><button class="ok">确定</button><button>取消</button></div>
<footer class="dlg-status"><span>坐标<span class="m"> (X: 0 Y: 0)</span></span><span>命令：无</span><span class="rest">绘图结束，插入点坐标<span class="m">[X: -1 Y: -1]</span></span></footer>
</div>
</section>

<svg class="marks" aria-hidden="true">
<rect x="361" y="201" width="324" height="179" fill="none" stroke="#f00" stroke-width="6"/>
<g stroke="#f00" stroke-width="6" stroke-linecap="round"><path d="M271 154L465 157M679 167L850 385M121 376L196 190"/></g>
<path d="M497 158L461 169V146zM871 411L839 391L858 375zM207 161L184 188L206 198z" fill="#f00"/>
</svg>
</body>
</html>
```

FILE: styles.css
```css
* { box-sizing: border-box; }
html, body { margin: 0; height: 100%; }
body {
  display: flex;
  flex-direction: column;
  position: relative;
  overflow: hidden;
  background: #f0f0f0;
  color: #000;
  font: 12px/16px "Noto Sans", "Noto Sans CJK SC", sans-serif;
  white-space: nowrap;
}
button, input, select { font: inherit; color: inherit; margin: 0; }
button { background: none; border: 0; padding: 0; white-space: nowrap; }
ul { list-style: none; margin: 0; padding: 0; }
svg { display: block; flex: none; }
.defs { position: absolute; width: 0; height: 0; }
.m { font: 10px/12px "Liberation Mono", monospace; white-space: pre; }

.menubar { display: flex; flex: none; gap: 11px; height: 22px; padding: 0 7px; align-items: flex-start; }
.menubar button { height: 15px; line-height: 15px; }

.toolbar { display: flex; flex: none; align-items: center; background: linear-gradient(#fdfdfd, #efefef); overflow: hidden; }
.group { display: flex; align-items: center; }
.tool { display: flex; flex: none; align-items: center; gap: 4px; margin-right: 7px; }
.menubar .tool { margin-right: 0; }
.tool svg { width: 16px; height: 16px; }
.off { color: #7d7d7d; }
.dd { flex: none; width: 6px; height: 3px; margin-left: 2px; background: currentColor; clip-path: polygon(0 0, 100% 0, 50% 100%); }
.near .dd { margin-left: -2px; }
.sep { flex: none; width: 1px; height: 18px; margin-right: 5px; background: #b8b8b8; }
.sigma { width: 16px; font: bold 15px/16px "Liberation Serif", serif; }
.main-tools { height: 30px; padding-left: 4px; }
.quick { margin-right: 4px; }
.boxed { height: 23px; padding: 0 3px 0 1px; margin: 0 4px 0 2px; border: 1px solid #666; }

.work { display: flex; flex: 1; min-height: 0; }
.navpanel { display: flex; flex: none; flex-direction: column; width: 165px; margin: 1px 7px 2px 0; }
.nav-title { display: flex; justify-content: space-between; height: 16px; padding: 0 3px 0 0; border: 1px solid #8c8c8c; border-left: 0; font-size: 13px; line-height: 13px; }
.pin { width: 26px; height: 11px; margin-top: 2px; }
.nav-btn { flex: none; height: 22px; border: solid #999; border-width: 1px 1px 0 0; background: #efefef; }
.nav-btn:last-child { border-bottom-width: 1px; }
.nav-box { display: flex; flex: 1; flex-direction: column; margin: 0 1px; border: solid #999; border-width: 1px 0; }
.fold-tools { height: 28px; padding: 6px 5px; background: linear-gradient(#fff, #eee); }
.fold-tools svg { width: 42px; height: 16px; }

.tree { flex: 1; padding-top: 1px; border: 1px solid #828790; background: #fff; }
.row { display: flex; align-items: center; gap: 4px; height: 16px; padding-left: 10px; }
.tree svg { width: 16px; height: 16px; }
.row::before { content: ""; width: 8px; height: 9px; margin-right: 2px; background: #aaa; clip-path: polygon(20% 0, 90% 50%, 20% 100%, 20% 0, 34% 24%, 34% 76%, 68% 50%, 34% 24%); }
.row.open::before { width: 7px; height: 6px; margin-right: 3px; background: #333; clip-path: polygon(100% 0, 100% 100%, 0 100%); }
.kids { margin-left: 13px; padding-left: 19px; background: repeating-linear-gradient(#888 0 1px, transparent 1px 2px) 0 0 / 1px 100% no-repeat; }
.kids li { display: flex; align-items: center; height: 16px; background: repeating-linear-gradient(#888 0 1px, transparent 1px 2px) 0 0 / 1px 100% no-repeat; }
.kids li:last-child { background-size: 1px 8px; }
.kids li::before { content: ""; flex: none; width: 11px; border-top: 1px dotted #888; }
.kids svg { margin-right: 4px; }
.current { display: flex; align-items: center; padding-right: 4px; border-radius: 3px; background: #ebebeb; box-shadow: 0 0 0 1px #ddd inset; }

.editor { display: flex; flex: 1; flex-direction: column; min-width: 0; }
.edit-tools { height: 28px; margin-top: 1px; padding-left: 3px; }
.floor { display: flex; align-items: center; gap: 3px; margin-right: 2px; }
.pick { display: flex; align-items: center; width: 64px; height: 20px; background: #fff; }
.pick select { flex: 1; appearance: none; height: 16px; padding: 0 2px; border: 0; background: none; }
.pick .dd { margin-right: 8px; }
.textual { padding: 0 9px 0 2px; margin-right: 0; gap: 6px; }
.panes { display: flex; flex: 1; min-height: 0; }
.components { display: flex; flex: none; flex-direction: column; width: 184px; margin: 5px 3px 2px -1px; }
.search { display: flex; gap: 5px; height: 25px; padding-bottom: 1px; }
.search input { width: 158px; height: 24px; padding: 0 3px; border: 1px solid #c8ccd0; background: #fff; }
.search input::placeholder { color: #777; }
.search svg { width: 16px; height: 16px; }
.comp-tree { border-right-width: 2px; }
.comp-tree .kids { margin-left: 12px; background: none; }
.comp-tree .kids li::before { width: 9px; }
.comp-tree .kids svg { margin: 0 5px 0 1px; }
.comp-tree .m, tbody th, td:nth-child(3) .m { font-size: 11px; }
.selected { display: flex; height: 15px; align-items: center; padding-right: 3px; background: #316ac5; }

.props { display: flex; flex: 1; flex-direction: column; min-width: 0; background: #fff; border-left: 1px solid #828790; margin-bottom: 2px; }
.tabs { display: flex; flex: none; height: 20px; border-bottom: 1px solid #828790; }
.tab { width: 63px; height: 20px; border: 1px solid #828790; border-width: 1px 1px 0 0; background: #fff; }
.props-frame { display: flex; flex: 1; padding: 4px 0 4px 3px; border-bottom: 1px solid #828790; }
.props-body { flex: 1; border: 1px solid #a0a0a0; border-right: 0; padding-top: 1px; }
table { width: 370px; table-layout: fixed; border-collapse: separate; border-spacing: 0; }
.c-no { width: 22px; } .c-name { width: 191px; } .c-val { width: 126px; } .c-add { width: 31px; }
th, td { height: 19px; padding: 0 2px; border: solid #c0c0c0; border-width: 0 1px 1px 0; line-height: 16px; text-align: left; font-weight: normal; overflow: hidden; }
thead th { height: 23px; padding: 2px 0 0; text-align: center; background: linear-gradient(#fff, #eee); }
thead .hot { background: linear-gradient(#fbdc9c, #f2bd5c); color: #800040; }
tbody th { padding: 0; text-align: center; background: #f0f0f0; font-family: "Liberation Mono", monospace; }
td:nth-child(2) { padding: 2px 0 0 19px; }
td:last-child { padding: 0; }
td input { appearance: none; display: block; width: 13px; height: 13px; margin: 0 auto; border: 1px solid #8e8f8f; background: linear-gradient(135deg, #c8cdd2, #fff); box-shadow: inset 0 0 0 1px #fff; }
.blue { color: #0000c8; }
.dim td { color: #848484; }
.sel td:nth-child(2) { background: #3399ff; color: #fff; }
.sel td:nth-child(3) { background: #deedff; }
.sel th { background: #fbc878; color: #a04040; }
tr td.expand { padding-left: 3px; }
.expand button { width: 11px; height: 11px; margin-right: 5px; border: 1px solid #bbb; color: #000; font-size: 12px; line-height: 8px; vertical-align: 1px; }

.statusbar { display: flex; flex: none; gap: 2px; height: 21px; padding: 1px 0; }
.statusbar > span { padding: 1px 2px; border: 1px solid #d0d0d0; background: linear-gradient(#f3f3f3, #fff); }
.s1 { width: 148px; } .s2 { width: 78px; } .s3 { width: 98px; } .s4 { width: 48px; }
.rest { flex: 1; }

.taskbar { display: flex; flex: none; height: 19px; padding-left: 6px; overflow: hidden; border-top: 1px solid #5a6a88; background: linear-gradient(90deg, #8ca4c6, #93a5ca 180px, #b0c4ec 380px, #a9bce4); }
.taskbar svg { width: 40px; height: 19px; }
.launch { width: 56px; }
.wide { width: 63px; }
.task { display: flex; justify-content: center; width: 59px; margin-right: 3px; border: 1px solid #5c6a86; border-bottom: 0; border-radius: 2px 2px 0 0; background: linear-gradient(135deg, #e8eefc, #b0bfe0); }

.dialog { position: absolute; left: 544px; top: 371px; width: 766px; padding: 1px 5px 8px 4px; border: 1px solid #1c2838; border-bottom: 0; border-radius: 2px; background: linear-gradient(90deg, #d9eafb, #b4d4f5 25%, #b9d8f7 55%, #dcecfd) 0 0 / 100% 27px no-repeat, linear-gradient(#cfe3f8 96%, #86a6cc); box-shadow: 2px 2px 14px 4px rgba(0, 0, 0, .65); }
.dlg-title { display: flex; justify-content: space-between; height: 24px; padding: 3px 0 0 2px; line-height: 18px; }
.dlg-title button { display: grid; place-items: center; width: 19px; height: 19px; border: 1px solid #6b2a25; border-radius: 2px; background: linear-gradient(#eeb0a0 45%, #c84830 50%, #dc7858); }
.dlg-title svg { width: 8px; height: 8px; }
.dlg-body { border: 1px solid #000; padding: 0 1px; background: #f0f0f0; }
.dlg-tools { height: 29px; padding-left: 4px; }
.dlg-options { height: 28px; padding-left: 4px; }
.grip { width: 2px; height: 16px; margin-right: 5px; background: repeating-linear-gradient(#aaa 0 2px, transparent 2px 4px); }
.radio { display: flex; align-items: center; gap: 9px; margin-right: 9px; }
.radio input { appearance: none; width: 11px; height: 11px; border: 1px solid #999; border-radius: 50%; background: #fff; }
.radio input:checked { background: radial-gradient(#111 0 2px, #fff 3px); }
.dlg-options .grip { margin-right: 3px; }
.dlg-options .sep { margin: 0 4px; }
.coord { display: flex; align-items: center; gap: 7px; margin-right: 11px; }
.spin { display: flex; width: 78px; height: 23px; border: 1px solid #777; background: #f4f4f4; color: #888; }
.spin input { width: 60px; border: 0; padding: 0; background: none; text-align: right; }
.spin i { width: 6px; height: 15px; margin: 4px 4px; background: #555; clip-path: polygon(50% 0, 100% 20%, 0 20%, 50% 0, 0 80%, 100% 80%, 50% 100%, 0 80%); }
.canvas { width: 100%; height: 468px; background: #000; overflow: visible; }
.dims text { fill: #d0d0d0; font: 12px "Liberation Mono", monospace; }
.total { fill: #20e820; font: bold 15px "Liberation Mono", monospace; }
.dyn { height: 28px; border-bottom: 1px solid #999; }
.dyn button { width: 61px; height: 22px; padding-top: 4px; background: #fafafa; }
.actions { display: flex; justify-content: flex-end; gap: 15px; padding: 9px 13px 9px 0; }
.actions button { width: 72px; height: 23px; border: 1px solid #707070; border-radius: 3px; background: linear-gradient(#f4f4f4 45%, #dcdcdc 55%, #cfcfcf); }
.actions .ok { border-color: #2a8dc4; box-shadow: inset 0 0 0 1px #7fdcf8; }
.dlg-status { display: flex; gap: 2px; height: 19px; }
.dlg-status > span { width: 148px; padding: 1px; border: 1px solid #ccc; border-bottom: 0; background: linear-gradient(#f2f2f2, #fff); }
.dlg-status .rest { width: auto; }

.marks { position: absolute; inset: 0; width: 100%; height: 100%; pointer-events: none; }
```
